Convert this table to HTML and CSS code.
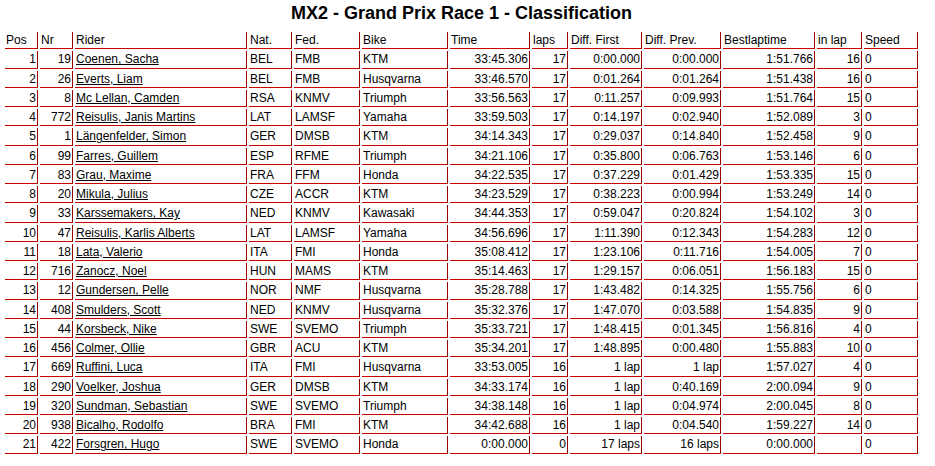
FILE: index.html
```html
<!DOCTYPE html>
<html>
<head>
<meta charset="utf-8">
<title>MX2 - Grand Prix Race 1 - Classification</title>
<link rel="stylesheet" href="styles.css">
</head>
<body>
<div class="page">
<h1 class="title">MX2 - Grand Prix Race 1 - Classification</h1>
<table class="results">
<thead>
<tr>
<th class="c-pos">Pos</th><th class="c-nr">Nr</th><th class="c-rider">Rider</th><th class="c-nat">Nat.</th><th class="c-fed">Fed.</th><th class="c-bike">Bike</th><th class="c-time">Time</th><th class="c-laps">laps</th><th class="c-dfirst">Diff. First</th><th class="c-dprev">Diff. Prev.</th><th class="c-best">Bestlaptime</th><th class="c-inlap">in lap</th><th class="c-speed">Speed</th>
</tr>
</thead>
<tbody>
<tr><td class="num">1</td><td class="num">19</td><td><a href="#">Coenen, Sacha</a></td><td>BEL</td><td>FMB</td><td>KTM</td><td class="num">33:45.306</td><td class="num">17</td><td class="num">0:00.000</td><td class="num">0:00.000</td><td class="num">1:51.766</td><td class="num">16</td><td>0</td></tr>
<tr><td class="num">2</td><td class="num">26</td><td><a href="#">Everts, Liam</a></td><td>BEL</td><td>FMB</td><td>Husqvarna</td><td class="num">33:46.570</td><td class="num">17</td><td class="num">0:01.264</td><td class="num">0:01.264</td><td class="num">1:51.438</td><td class="num">16</td><td>0</td></tr>
<tr><td class="num">3</td><td class="num">8</td><td><a href="#">Mc Lellan, Camden</a></td><td>RSA</td><td>KNMV</td><td>Triumph</td><td class="num">33:56.563</td><td class="num">17</td><td class="num">0:11.257</td><td class="num">0:09.993</td><td class="num">1:51.764</td><td class="num">15</td><td>0</td></tr>
<tr><td class="num">4</td><td class="num">772</td><td><a href="#">Reisulis, Janis Martins</a></td><td>LAT</td><td>LAMSF</td><td>Yamaha</td><td class="num">33:59.503</td><td class="num">17</td><td class="num">0:14.197</td><td class="num">0:02.940</td><td class="num">1:52.089</td><td class="num">3</td><td>0</td></tr>
<tr><td class="num">5</td><td class="num">1</td><td><a href="#">Längenfelder, Simon</a></td><td>GER</td><td>DMSB</td><td>KTM</td><td class="num">34:14.343</td><td class="num">17</td><td class="num">0:29.037</td><td class="num">0:14.840</td><td class="num">1:52.458</td><td class="num">9</td><td>0</td></tr>
<tr><td class="num">6</td><td class="num">99</td><td><a href="#">Farres, Guillem</a></td><td>ESP</td><td>RFME</td><td>Triumph</td><td class="num">34:21.106</td><td class="num">17</td><td class="num">0:35.800</td><td class="num">0:06.763</td><td class="num">1:53.146</td><td class="num">6</td><td>0</td></tr>
<tr><td class="num">7</td><td class="num">83</td><td><a href="#">Grau, Maxime</a></td><td>FRA</td><td>FFM</td><td>Honda</td><td class="num">34:22.535</td><td class="num">17</td><td class="num">0:37.229</td><td class="num">0:01.429</td><td class="num">1:53.335</td><td class="num">15</td><td>0</td></tr>
<tr><td class="num">8</td><td class="num">20</td><td><a href="#">Mikula, Julius</a></td><td>CZE</td><td>ACCR</td><td>KTM</td><td class="num">34:23.529</td><td class="num">17</td><td class="num">0:38.223</td><td class="num">0:00.994</td><td class="num">1:53.249</td><td class="num">14</td><td>0</td></tr>
<tr><td class="num">9</td><td class="num">33</td><td><a href="#">Karssemakers, Kay</a></td><td>NED</td><td>KNMV</td><td>Kawasaki</td><td class="num">34:44.353</td><td class="num">17</td><td class="num">0:59.047</td><td class="num">0:20.824</td><td class="num">1:54.102</td><td class="num">3</td><td>0</td></tr>
<tr><td class="num">10</td><td class="num">47</td><td><a href="#">Reisulis, Karlis Alberts</a></td><td>LAT</td><td>LAMSF</td><td>Yamaha</td><td class="num">34:56.696</td><td class="num">17</td><td class="num">1:11.390</td><td class="num">0:12.343</td><td class="num">1:54.283</td><td class="num">12</td><td>0</td></tr>
<tr><td class="num">11</td><td class="num">18</td><td><a href="#">Lata, Valerio</a></td><td>ITA</td><td>FMI</td><td>Honda</td><td class="num">35:08.412</td><td class="num">17</td><td class="num">1:23.106</td><td class="num">0:11.716</td><td class="num">1:54.005</td><td class="num">7</td><td>0</td></tr>
<tr><td class="num">12</td><td class="num">716</td><td><a href="#">Zanocz, Noel</a></td><td>HUN</td><td>MAMS</td><td>KTM</td><td class="num">35:14.463</td><td class="num">17</td><td class="num">1:29.157</td><td class="num">0:06.051</td><td class="num">1:56.183</td><td class="num">15</td><td>0</td></tr>
<tr><td class="num">13</td><td class="num">12</td><td><a href="#">Gundersen, Pelle</a></td><td>NOR</td><td>NMF</td><td>Husqvarna</td><td class="num">35:28.788</td><td class="num">17</td><td class="num">1:43.482</td><td class="num">0:14.325</td><td class="num">1:55.756</td><td class="num">6</td><td>0</td></tr>
<tr><td class="num">14</td><td class="num">408</td><td><a href="#">Smulders, Scott</a></td><td>NED</td><td>KNMV</td><td>Husqvarna</td><td class="num">35:32.376</td><td class="num">17</td><td class="num">1:47.070</td><td class="num">0:03.588</td><td class="num">1:54.835</td><td class="num">9</td><td>0</td></tr>
<tr><td class="num">15</td><td class="num">44</td><td><a href="#">Korsbeck, Nike</a></td><td>SWE</td><td>SVEMO</td><td>Triumph</td><td class="num">35:33.721</td><td class="num">17</td><td class="num">1:48.415</td><td class="num">0:01.345</td><td class="num">1:56.816</td><td class="num">4</td><td>0</td></tr>
<tr><td class="num">16</td><td class="num">456</td><td><a href="#">Colmer, Ollie</a></td><td>GBR</td><td>ACU</td><td>KTM</td><td class="num">35:34.201</td><td class="num">17</td><td class="num">1:48.895</td><td class="num">0:00.480</td><td class="num">1:55.883</td><td class="num">10</td><td>0</td></tr>
<tr><td class="num">17</td><td class="num">669</td><td><a href="#">Ruffini, Luca</a></td><td>ITA</td><td>FMI</td><td>Husqvarna</td><td class="num">33:53.005</td><td class="num">16</td><td class="num">1 lap</td><td class="num">1 lap</td><td class="num">1:57.027</td><td class="num">4</td><td>0</td></tr>
<tr><td class="num">18</td><td class="num">290</td><td><a href="#">Voelker, Joshua</a></td><td>GER</td><td>DMSB</td><td>KTM</td><td class="num">34:33.174</td><td class="num">16</td><td class="num">1 lap</td><td class="num">0:40.169</td><td class="num">2:00.094</td><td class="num">9</td><td>0</td></tr>
<tr><td class="num">19</td><td class="num">320</td><td><a href="#">Sundman, Sebastian</a></td><td>SWE</td><td>SVEMO</td><td>Triumph</td><td class="num">34:38.148</td><td class="num">16</td><td class="num">1 lap</td><td class="num">0:04.974</td><td class="num">2:00.045</td><td class="num">8</td><td>0</td></tr>
<tr><td class="num">20</td><td class="num">938</td><td><a href="#">Bicalho, Rodolfo</a></td><td>BRA</td><td>FMI</td><td>KTM</td><td class="num">34:42.688</td><td class="num">16</td><td class="num">1 lap</td><td class="num">0:04.540</td><td class="num">1:59.227</td><td class="num">14</td><td>0</td></tr>
<tr><td class="num">21</td><td class="num">422</td><td><a href="#">Forsgren, Hugo</a></td><td>SWE</td><td>SVEMO</td><td>Honda</td><td class="num">0:00.000</td><td class="num">0</td><td class="num">17 laps</td><td class="num">16 laps</td><td class="num">0:00.000</td><td class="num"></td><td>0</td></tr>
</tbody>
</table>
</div>
</body>
</html>
```
FILE: styles.css
```css
html, body {
  margin: 0;
  padding: 0;
  background: #ffffff;
}

.page {
  width: 917px;
  padding: 3px 0 0 3px;
  font-family: "Liberation Sans", Arial, sans-serif;
  color: #000000;
}

.title {
  margin: 0 0 6px 0;
  font-size: 18px;
  line-height: 21px;
  font-weight: bold;
  text-align: center;
}

.results {
  width: 917px;
  table-layout: fixed;
  border-collapse: separate;
  border-spacing: 2px;
  font-size: 12px;
}

.results th,
.results td {
  box-sizing: border-box;
  padding: 1px 1px;
  line-height: 14.25px;
  font-weight: normal;
  text-align: left;
  vertical-align: middle;
  white-space: nowrap;
  overflow: hidden;
  border-right: 1px solid #990000;
  border-bottom: 1px solid #cc0000;
}

.results td.num {
  text-align: right;
}

.results a {
  color: #000000;
  text-decoration: underline;
}

.c-pos { width: 33px; }
.c-nr { width: 33px; }
.c-rider { width: 172px; }
.c-nat { width: 43px; }
.c-fed { width: 66px; }
.c-bike { width: 86px; }
.c-time { width: 80px; }
.c-laps { width: 36px; }
.c-dfirst { width: 72px; }
.c-dprev { width: 77px; }
.c-best { width: 92px; }
.c-inlap { width: 45px; }
.c-speed { width: 54px; }
```
